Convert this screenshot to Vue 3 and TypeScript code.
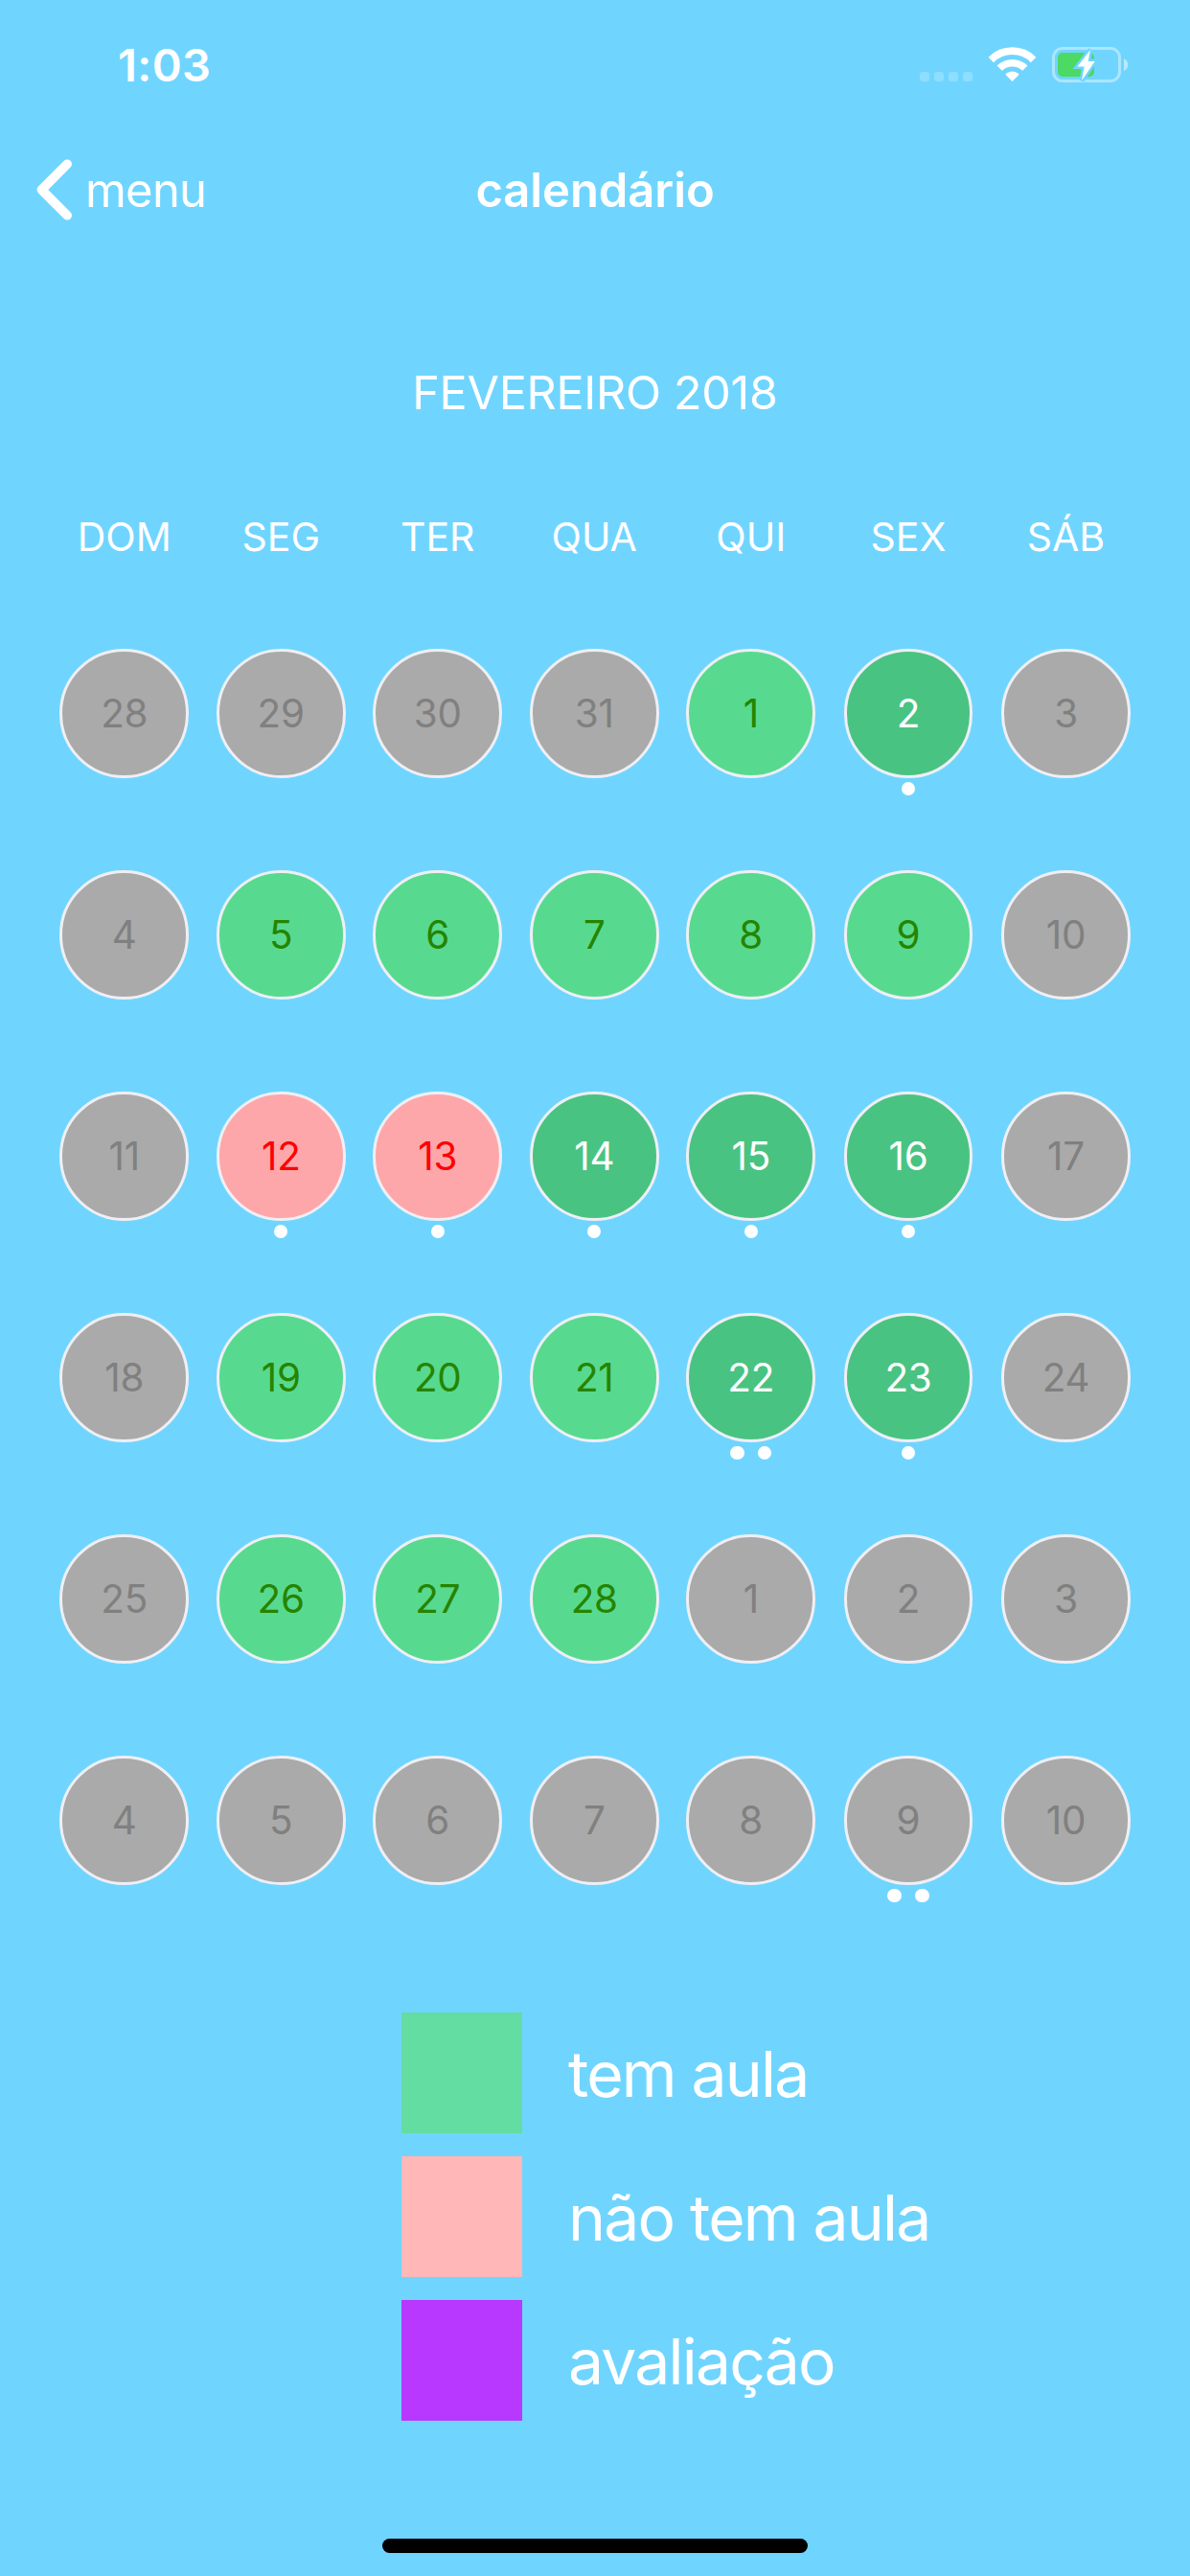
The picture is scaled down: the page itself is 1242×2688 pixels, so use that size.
<script setup lang="ts">
type Kind = 'off' | 'class' | 'event' | 'free'

interface Day {
  n: number
  kind: Kind
  dots: number
}

const weekdays: string[] = ['DOM', 'SEG', 'TER', 'QUA', 'QUI', 'SEX', 'SÁB']

const day = (n: number, kind: Kind = 'off', dots = 0): Day => ({ n, kind, dots })

const weeks: Day[][] = [
  [day(28), day(29), day(30), day(31), day(1, 'class'), day(2, 'event', 1), day(3)],
  [day(4), day(5, 'class'), day(6, 'class'), day(7, 'class'), day(8, 'class'), day(9, 'class'), day(10)],
  [day(11), day(12, 'free', 1), day(13, 'free', 1), day(14, 'event', 1), day(15, 'event', 1), day(16, 'event', 1), day(17)],
  [day(18), day(19, 'class'), day(20, 'class'), day(21, 'class'), day(22, 'event', 2), day(23, 'event', 1), day(24)],
  [day(25), day(26, 'class'), day(27, 'class'), day(28, 'class'), day(1), day(2), day(3)],
  [day(4), day(5), day(6), day(7), day(8), day(9, 'off', 2), day(10)],
]

const legend = [
  { label: 'tem aula', tone: 'green' },
  { label: 'não tem aula', tone: 'pink' },
  { label: 'avaliação', tone: 'purple' },
]
</script>

<template>
  <div class="screen">
    <header class="status">
      <span class="time">1:03</span>
      <svg class="indicators" width="222" height="46" viewBox="956 44 222 46">
        <g fill="#fff" fill-opacity="0.22">
          <rect x="960" y="75" width="10" height="10" rx="3" />
          <rect x="975" y="75" width="10" height="10" rx="3" />
          <rect x="990" y="75" width="10" height="10" rx="3" />
          <rect x="1005" y="75" width="10" height="10" rx="3" />
        </g>
        <g fill="none" stroke="#fff">
          <path d="M1034.4 62.4A31.2 31.2 0 0 1 1078.6 62.4" stroke-width="7.8" />
          <path d="M1043.2 71.2A18.8 18.8 0 0 1 1069.8 71.2" stroke-width="7.4" />
        </g>
        <path d="M1056.5 85L1049.6 78.1Q1049.4 77.2 1050.4 76.6A11 11 0 0 1 1062.6 76.6Q1063.6 77.2 1063.4 78.1Z" fill="#fff" />
        <rect x="1099.5" y="50.5" width="69" height="34" rx="9.5" fill="none" stroke="#fff" stroke-opacity="0.42" stroke-width="3" />
        <path d="M1173 61Q1177.2 63 1177.2 67.5T1173 74Z" fill="#fff" fill-opacity="0.5" />
        <rect x="1104" y="55" width="38" height="25" rx="5" fill="#4cd964" />
        <path d="M1138 52L1124.5 69.5H1131.7L1129 84L1142.7 64H1135.7Z" fill="#6fd5ff" stroke="#6fd5ff" stroke-width="5" />
        <path d="M1138 52L1124.5 69.5H1131.7L1129 84L1142.7 64H1135.7Z" fill="#fff" />
      </svg>
    </header>

    <nav class="nav">
      <a class="back">
        <svg width="42" height="68" viewBox="36 164.4 42 68">
          <path d="M70.2 171.6L43.4 198.4L70.2 225.2" fill="none" stroke="#fff" stroke-width="9.6" stroke-linecap="round" stroke-linejoin="round" />
        </svg>
        <span>menu</span>
      </a>
      <h1 class="title">calendário</h1>
    </nav>

    <h2 class="month">FEVEREIRO 2018</h2>

    <div class="row weekdays">
      <span v-for="w in weekdays" :key="w">{{ w }}</span>
    </div>

    <main class="weeks">
      <div v-for="(week, i) in weeks" :key="i" class="row week">
        <div v-for="(d, j) in week" :key="j" class="cell">
          <div class="day" :class="d.kind">{{ d.n }}</div>
          <div v-if="d.dots" class="dots">
            <i v-for="k in d.dots" :key="k"></i>
          </div>
        </div>
      </div>
    </main>

    <ul class="legend">
      <li v-for="item in legend" :key="item.tone">
        <span class="swatch" :class="item.tone"></span>
        <span class="label">{{ item.label }}</span>
      </li>
    </ul>

    <div class="home"></div>
  </div>
</template>

<style>
body {
  margin: 0;
  background: #6fd5ff;
}
</style>

<style scoped>
.screen {
  box-sizing: border-box;
  width: 1242px;
  height: 2688px;
  display: flex;
  flex-direction: column;
  background: #6fd5ff;
  color: #fff;
  font-family: Inter, "Liberation Sans", sans-serif;
  overflow: hidden;
}

.status {
  height: 132px;
  flex: none;
  display: flex;
  justify-content: space-between;
  align-items: flex-start;
  padding: 44px 64px 0 123px;
  box-sizing: border-box;
}

.time {
  font-size: 47px;
  font-weight: 600;
  line-height: 48px;
  letter-spacing: 0.4px;
}

.nav {
  height: 132px;
  flex: none;
  display: grid;
  grid-template-columns: 1fr auto 1fr;
  align-items: center;
  padding: 0 36px;
  font-size: 49px;
}

.back {
  display: flex;
  align-items: center;
  gap: 11px;
  letter-spacing: -0.8px;
}

.title {
  margin: 0;
  font-size: 49px;
  font-weight: 600;
  letter-spacing: -0.1px;
}

.month {
  margin: 0;
  height: 292px;
  flex: none;
  line-height: 291px;
  text-align: center;
  font-size: 48.5px;
  font-weight: 400;
  letter-spacing: -0.3px;
}

.row {
  display: grid;
  grid-template-columns: repeat(5, 163.5px) 165px 164px;
  padding-left: 48px;
}

.weekdays {
  height: 121px;
  flex: none;
  text-align: center;
  font-size: 41px;
  line-height: 9px;
}

.week {
  height: 231px;
}

.cell {
  display: flex;
  flex-direction: column;
  align-items: center;
}

.day {
  box-sizing: border-box;
  width: 134.6px;
  height: 134.6px;
  border: 3px solid #efeff4;
  border-radius: 50%;
  text-align: center;
  font-size: 40.4px;
  line-height: 129px;
  letter-spacing: -0.2px;
}

.off {
  background: #aaa;
  color: #808080;
}

.class {
  background: #57da8f;
  color: #268400;
}

.event {
  background: #49c382;
  color: #fff;
}

.free {
  background: #fda7aa;
  color: #f00;
}

.dots {
  display: flex;
  gap: 14.4px;
  margin-top: 4.4px;
}

.dots i {
  width: 14.4px;
  height: 14.4px;
  border-radius: 50%;
  background: #fff;
}

.weeks {
  height: 1423px;
  flex: none;
}

.legend {
  list-style: none;
  margin: 0;
  padding: 0 0 0 419px;
  display: flex;
  flex-direction: column;
  gap: 24px;
}

.legend li {
  display: flex;
  align-items: center;
  gap: 48px;
  height: 126px;
}

.swatch {
  width: 126px;
  height: 126px;
}

.green {
  background: #63dda1;
}

.pink {
  background: #ffb7b7;
}

.purple {
  background: #b838ff;
}

.label {
  font-size: 66px;
  line-height: 126px;
  letter-spacing: -1.8px;
  padding-top: 2px;
}

.home {
  width: 444px;
  height: 15px;
  border-radius: 8px;
  background: #000;
  margin: auto auto 24px;
}
</style>
